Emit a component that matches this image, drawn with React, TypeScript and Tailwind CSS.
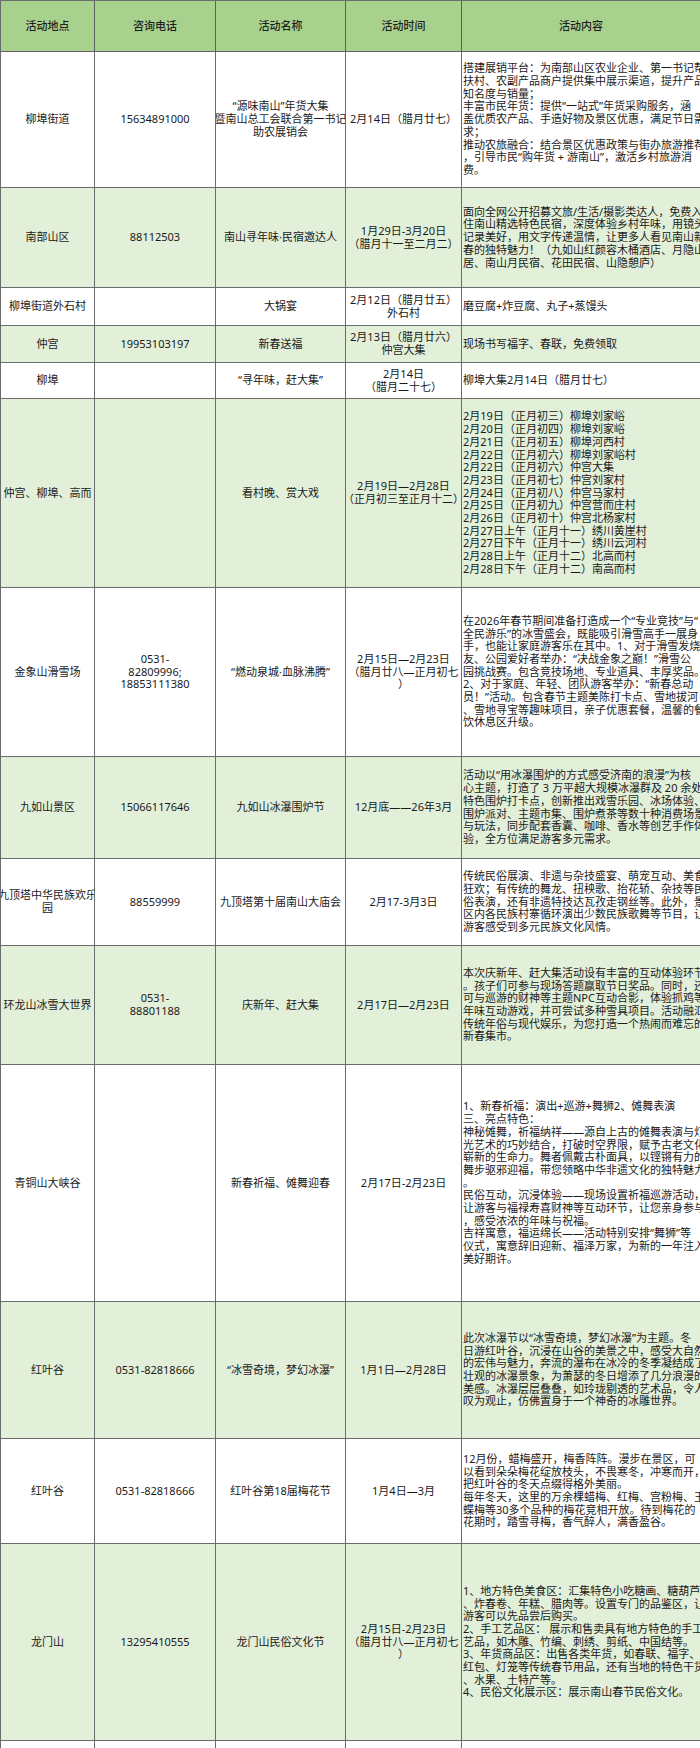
import React from "react";

type Row = {
  h: number;
  green: boolean;
  cols: string[][];
  content: string[];
};

const rows: Row[] = [
  {
    h: 136,
    green: false,
    cols: [["柳埠街道"], ["15634891000"], ["“源味南山”年货大集", "暨南山总工会联合第一书记", "助农展销会"], ["2月14日（腊月廿七）"]],
    content: [
      "搭建展销平台：为南部山区农业企业、第一书记帮",
      "扶村、农副产品商户提供集中展示渠道，提升产品",
      "知名度与销量；",
      "丰富市民年货：提供“一站式”年货采购服务，涵",
      "盖优质农产品、手造好物及景区优惠，满足节日需",
      "求；",
      "推动农旅融合：结合景区优惠政策与街办旅游推荐",
      "，引导市民“购年货 + 游南山”，激活乡村旅游消",
      "费。",
    ],
  },
  {
    h: 100,
    green: true,
    cols: [["南部山区"], ["88112503"], ["南山寻年味·民宿邀达人"], ["1月29日-3月20日", "（腊月十一至二月二）"]],
    content: [
      "面向全网公开招募文旅/生活/摄影类达人，免费入",
      "住南山精选特色民宿，深度体验乡村年味，用镜头",
      "记录美好，用文字传递温情，让更多人看见南山新",
      "春的独特魅力！（九如山红颜容木桶酒店、月隐山",
      "居、南山月民宿、花田民宿、山隐憩庐）",
    ],
  },
  {
    h: 38,
    green: false,
    cols: [["柳埠街道外石村"], [""], ["大锅宴"], ["2月12日（腊月廿五）", "外石村"]],
    content: ["磨豆腐+炸豆腐、丸子+蒸馒头"],
  },
  {
    h: 37,
    green: true,
    cols: [["仲宫"], ["19953103197"], ["新春送福"], ["2月13日（腊月廿六）", "仲宫大集"]],
    content: ["现场书写福字、春联，免费领取"],
  },
  {
    h: 36,
    green: false,
    cols: [["柳埠"], [""], ["“寻年味，赶大集”"], ["2月14日", "（腊月二十七）"]],
    content: ["柳埠大集2月14日（腊月廿七）"],
  },
  {
    h: 189,
    green: true,
    cols: [["仲宫、柳埠、高而"], [""], ["看村晚、赏大戏"], ["2月19日—2月28日", "（正月初三至正月十二）"]],
    content: [
      "2月19日（正月初三）柳埠刘家峪",
      "2月20日（正月初四）柳埠刘家峪",
      "2月21日（正月初五）柳埠河西村",
      "2月22日（正月初六）柳埠刘家峪村",
      "2月22日（正月初六）仲宫大集",
      "2月23日（正月初七）仲宫刘家村",
      "2月24日（正月初八）仲宫马家村",
      "2月25日（正月初九）仲宫营而庄村",
      "2月26日（正月初十）仲宫北杨家村",
      "2月27日上午（正月十一）绣川黄崖村",
      "2月27日下午（正月十一）绣川云河村",
      "2月28日上午（正月十二）北高而村",
      "2月28日下午（正月十二）南高而村",
    ],
  },
  {
    h: 169,
    green: false,
    cols: [["金象山滑雪场"], ["0531-", "82809996;", "18853111380"], ["“燃动泉城·血脉沸腾”"], ["2月15日—2月23日", "（腊月廿八—正月初七", "）"]],
    content: [
      "在2026年春节期间准备打造成一个“专业竞技”与“",
      "全民游乐”的冰雪盛会，既能吸引滑雪高手一展身",
      "手，也能让家庭游客乐在其中。1、对于滑雪发烧",
      "友、公园爱好者举办：“决战金象之巅！”滑雪公",
      "园挑战赛。包含竞技场地、专业道具、丰厚奖品。",
      "2、对于家庭、年轻、团队游客举办：“新春总动",
      "员！”活动。包含春节主题美陈打卡点、雪地拔河",
      "、雪地寻宝等趣味项目，亲子优惠套餐，温馨的餐",
      "饮休息区升级。",
    ],
  },
  {
    h: 102,
    green: true,
    cols: [["九如山景区"], ["15066117646"], ["九如山冰瀑围炉节"], ["12月底——26年3月"]],
    content: [
      "活动以“用冰瀑围炉的方式感受济南的浪漫”为核",
      "心主题，打造了 3 万平超大规模冰瀑群及 20 余处",
      "特色围炉打卡点，创新推出戏雪乐园、冰场体验、",
      "围炉派对、主题市集、围炉煮茶等数十种消费场景",
      "与玩法，同步配套香囊、咖啡、香水等创艺手作体",
      "验，全方位满足游客多元需求。",
    ],
  },
  {
    h: 87,
    green: false,
    cols: [["九顶塔中华民族欢乐", "园"], ["88559999"], ["九顶塔第十届南山大庙会"], ["2月17-3月3日"]],
    content: [
      "传统民俗展演、非遗与杂技盛宴、萌宠互动、美食",
      "狂欢；有传统的舞龙、扭秧歌、抬花轿、杂技等民",
      "俗表演，还有非遗特技达瓦孜走钢丝等。此外，景",
      "区内各民族村寨循环演出少数民族歌舞等节目，让",
      "游客感受到多元民族文化风情。",
    ],
  },
  {
    h: 119,
    green: true,
    cols: [["环龙山冰雪大世界"], ["0531-", "88801188"], ["庆新年、赶大集"], ["2月17日—2月23日"]],
    content: [
      "本次庆新年、赶大集活动设有丰富的互动体验环节",
      "。孩子们可参与现场答题赢取节日奖品。同时，还",
      "可与巡游的财神等主题NPC互动合影，体验抓鸡等",
      "年味互动游戏，并可尝试多种雪具项目。活动融汇",
      "传统年俗与现代娱乐，为您打造一个热闹而难忘的",
      "新春集市。",
    ],
  },
  {
    h: 237,
    green: false,
    cols: [["青铜山大峡谷"], [""], ["新春祈福、傩舞迎春"], ["2月17日-2月23日"]],
    content: [
      "1、新春祈福：演出+巡游+舞狮2、傩舞表演",
      "三、亮点特色：",
      "神秘傩舞，祈福纳祥——源自上古的傩舞表演与灯",
      "光艺术的巧妙结合，打破时空界限，赋予古老文化",
      "崭新的生命力。舞者佩戴古朴面具，以铿锵有力的",
      "舞步驱邪迎福，带您领略中华非遗文化的独特魅力",
      "。",
      "民俗互动，沉浸体验——现场设置祈福巡游活动，",
      "让游客与福禄寿喜财神等互动环节，让您亲身参与",
      "，感受浓浓的年味与祝福。",
      "吉祥寓意，福运绵长——活动特别安排“舞狮”等",
      "仪式，寓意辞旧迎新、福泽万家，为新的一年注入",
      "美好期许。",
    ],
  },
  {
    h: 137,
    green: true,
    cols: [["红叶谷"], ["0531-82818666"], ["“冰雪奇境，梦幻冰瀑”"], ["1月1日—2月28日"]],
    content: [
      "此次冰瀑节以“冰雪奇境，梦幻冰瀑”为主题。冬",
      "日游红叶谷，沉浸在山谷的美景之中，感受大自然",
      "的宏伟与魅力，奔流的瀑布在冰冷的冬季凝结成了",
      "壮观的冰瀑景象，为萧瑟的冬日增添了几分浪漫的",
      "美感。冰瀑层层叠叠，如玲珑剔透的艺术品，令人",
      "叹为观止，仿佛置身于一个神奇的冰雕世界。",
    ],
  },
  {
    h: 105,
    green: false,
    cols: [["红叶谷"], ["0531-82818666"], ["红叶谷第18届梅花节"], ["1月4日—3月"]],
    content: [
      "12月份，蜡梅盛开，梅香阵阵。漫步在景区，可",
      "以看到朵朵梅花绽放枝头，不畏寒冬，冲寒而开，",
      "把红叶谷的冬天点缀得格外美丽。",
      "每年冬天，这里的万余棵蜡梅、红梅、宫粉梅、玉",
      "蝶梅等30多个品种的梅花竞相开放。待到梅花的",
      "花期时，踏雪寻梅，香气醉人，满香盈谷。",
    ],
  },
  {
    h: 197,
    green: true,
    cols: [["龙门山"], ["13295410555"], ["龙门山民俗文化节"], ["2月15日-2月23日", "（腊月廿八—正月初七", "）"]],
    content: [
      "1、地方特色美食区：汇集特色小吃糖画、糖葫芦",
      "、炸春卷、年糕、腊肉等。设置专门的品鉴区，让",
      "游客可以先品尝后购买。",
      "2、手工艺品区： 展示和售卖具有地方特色的手工",
      "艺品，如木雕、竹编、刺绣、剪纸、中国结等。",
      "3、年货商品区：出售各类年货，如春联、福字、",
      "红包、灯笼等传统春节用品，还有当地的特色干货",
      "、水果、土特产等。",
      "4、民俗文化展示区：展示南山春节民俗文化。",
    ],
  },
  {
    h: 60,
    green: false,
    cols: [[""], [""], [""], [""]],
    content: [],
  },
];

const headers = ["活动地点", "咨询电话", "活动名称", "活动时间", "活动内容"];

export default function App() {
  return (
    <div
      className="h-[1748px] w-[700px] overflow-hidden bg-white text-[11px] leading-[12.7px] text-[#1a1a1a]"
      style={{ fontFamily: '"Noto Sans", "Noto Sans CJK SC", sans-serif' }}
    >
      <div className="border-l border-t border-[#6b6b6b]">
        <div className="grid h-[51px] grid-cols-[94px_121px_130px_116px_239px] bg-[#a9d18e]">
          {headers.map((t) => (
            <div
              key={t}
              className="flex items-center justify-center border-b border-r border-[#5f5f5f] font-medium text-[#1f1f1f]"
            >
              {t}
            </div>
          ))}
        </div>
        {rows.map((r, i) => (
          <div
            key={i}
            className={`grid grid-cols-[94px_121px_130px_116px_239px] ${r.green ? "bg-[#e2efd9]" : "bg-white"}`}
            style={{ height: r.h }}
          >
            {r.cols.map((lines, j) => (
              <div
                key={j}
                className="flex flex-col items-center justify-center overflow-hidden border-b border-r border-[#6b6b6b] text-center"
              >
                {lines.map((l, k) => (
                  <div key={k} className="whitespace-nowrap">
                    {l}
                  </div>
                ))}
              </div>
            ))}
            <div className="flex flex-col justify-center overflow-hidden border-b border-r border-[#6b6b6b] pl-[1px]">
              {r.content.map((l, k) => (
                <div key={k} className="whitespace-nowrap">
                  {l}
                </div>
              ))}
            </div>
          </div>
        ))}
      </div>
    </div>
  );
}
